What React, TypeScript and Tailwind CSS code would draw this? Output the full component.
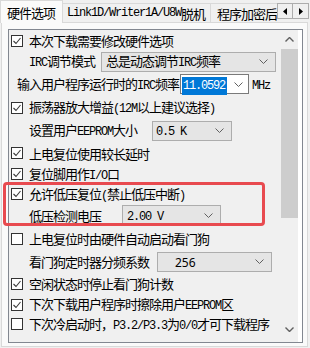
import type { ReactNode } from "react";

function T({ s }: { s: string }) {
  const parts = s.split(/([\x20-\x7e]+)/).filter((p) => p !== "");
  return (
    <>
      {parts.map((p, i) =>
        /^[\x20-\x7e]+$/.test(p) ? (
          <span key={i} className="font-['Liberation_Mono',monospace] text-[12px] tracking-[-1.2px] whitespace-pre">
            {p}
          </span>
        ) : (
          <span key={i}>{p}</span>
        ),
      )}
    </>
  );
}

function Check({ on }: { on?: boolean }) {
  return (
    <div className="w-[12px] h-[12px] shrink-0 border border-[#333] bg-white flex items-center justify-center">
      {on && (
        <svg width="10" height="10" viewBox="0 0 10 10">
          <polyline points="1.5,5 4,7.5 8.5,2" fill="none" stroke="#3a3a3a" strokeWidth="1.1" />
        </svg>
      )}
    </div>
  );
}

function Chevron() {
  return (
    <svg width="9" height="5" viewBox="0 0 9 5" className="shrink-0">
      <polyline points="0.5,0.5 4.5,4.5 8.5,0.5" fill="none" stroke="#606060" strokeWidth="1" />
    </svg>
  );
}

function Select({ w, children, pad = "pl-[4px]" }: { w: string; children: ReactNode; pad?: string }) {
  return (
    <div className={`${w} h-[20px] shrink-0 bg-[#e5e5e5] border border-[#adadad] flex items-center pr-[7px] ${pad}`}>
      <div className="flex-1 whitespace-nowrap">{children}</div>
      <Chevron />
    </div>
  );
}

function CheckRow({ h, on, text }: { h: string; on?: boolean; text: string }) {
  return (
    <div className={`${h} flex items-center`}>
      <Check on={on} />
      <span className="ml-[6px] whitespace-nowrap">
        <T s={text} />
      </span>
    </div>
  );
}

export default function App() {
  return (
    <div className="w-[310px] h-[348px] bg-[#f0f0f0] overflow-hidden relative font-['Noto_Sans_CJK_SC',sans-serif] text-[13px] tracking-[-1px] text-black leading-none">
      {/* tab strip */}
      <div className="flex h-[22px] items-end relative z-10">
        <div className="w-[63px] shrink-0 h-[23px] -mb-px bg-[#fafafa] border border-b-0 border-[#d9d9d9] pl-[6px] flex items-center">
          硬件选项
        </div>
        <div className="w-[148px] shrink-0 h-[19px] border-t border-r border-[#d9d9d9] pl-[4px] flex items-center whitespace-nowrap overflow-hidden">
          <T s="Link1D/Writer1A/U8W脱机" />
        </div>
        <div className="w-[66px] shrink-0 h-[19px] border-t border-[#d9d9d9] pl-[6px] flex items-center whitespace-nowrap overflow-hidden">
          程序加密后
        </div>
        <div className="self-start mt-[3px] flex shrink-0">
          <div className="w-[16px] h-[16px] bg-[#f0f0f0] border border-[#adadad] flex items-center justify-center">
            <svg width="4" height="7" viewBox="0 0 4 7">
              <polygon points="4,0 0,3.5 4,7" fill="#000" />
            </svg>
          </div>
          <div className="w-[16px] h-[16px] bg-[#f0f0f0] border border-l-0 border-[#adadad] flex items-center justify-center">
            <svg width="4" height="7" viewBox="0 0 4 7">
              <polygon points="0,0 4,3.5 0,7" fill="#000" />
            </svg>
          </div>
        </div>
      </div>

      {/* tab panel */}
      <div className="ml-[1px] w-[307px] h-[325px] bg-[#fafafa] border border-[#d9d9d9] pt-[6px] px-[6px]">
        <div className="w-[295px] h-[314px] border border-[#828790] bg-[#f0f0f0] flex">
          {/* options */}
          <div className="w-[272px] pl-[2px]">
            <CheckRow h="h-[21px]" on text="本次下载需要修改硬件选项" />

            <div className="h-[21px] flex items-center pl-[18px]">
              <span className="w-[72px] shrink-0 whitespace-nowrap">
                <T s="IRC调节模式" />
              </span>
              <Select w="w-[175px]">
                <T s="总是动态调节IRC频率" />
              </Select>
            </div>

            <div className="h-[24px] flex items-center pl-[6px]">
              <span className="w-[163px] shrink-0 whitespace-nowrap">
                <T s="输入用户程序运行时的IRC频率" />
              </span>
              <div className="w-[69px] h-[20px] shrink-0 bg-white border border-[#7a7a7a] flex items-center pl-[1px] pr-[5px]">
                <div className="flex-1">
                  <span className="bg-[#0078d7] text-white font-['Liberation_Mono',monospace] text-[12px] tracking-[-1.2px] pl-[1px] pr-[2px] py-[2px]">
                    11.0592
                  </span>
                </div>
                <Chevron />
              </div>
              <span className="ml-[3px]">
                <T s="MHz" />
              </span>
            </div>

            <CheckRow h="h-[23px]" on text="振荡器放大增益(12M以上建议选择)" />

            <div className="h-[23px] flex items-center pl-[18px]">
              <span className="w-[123px] shrink-0 whitespace-nowrap">
                <T s="设置用户EEPROM大小" />
              </span>
              <Select w="w-[80px]" pad="pl-[3px]">
                <T s="0.5 K" />
              </Select>
            </div>

            <CheckRow h="h-[22px]" on text="上电复位使用较长延时" />
            <CheckRow h="h-[20px]" on text="复位脚用作I/O口" />
            <CheckRow h="h-[20px]" on text="允许低压复位(禁止低压中断)" />

            <div className="h-[22px] flex items-center pl-[18px]">
              <span className="w-[93px] shrink-0 whitespace-nowrap">低压检测电压</span>
              <Select w="w-[99px]">
                <T s="2.00 V" />
              </Select>
            </div>

            <CheckRow h="h-[25px]" text="上电复位时由硬件自动启动看门狗" />

            <div className="h-[21px] flex items-center pl-[18px]">
              <span className="w-[128px] shrink-0 whitespace-nowrap">看门狗定时器分频系数</span>
              <Select w="w-[115px]" pad="pl-[17px]">
                <span className="font-['Noto_Sans',sans-serif] text-[12px] tracking-normal">256</span>
              </Select>
            </div>

            <CheckRow h="h-[23px]" on text="空闲状态时停止看门狗计数" />
            <CheckRow h="h-[19px]" on text="下次下载用户程序时擦除用户EEPROM区" />
            <CheckRow h="h-[20px]" text="下次冷启动时，P3.2/P3.3为0/0才可下载程序" />
          </div>

          {/* scrollbar */}
          <div className="w-[17px] mt-[1px] mb-[4px] bg-[#f0f0f0] flex flex-col">
            <div className="h-[17px] flex items-center justify-center">
              <svg width="9" height="5" viewBox="0 0 9 5">
                <polyline points="0.5,4.5 4.5,0.5 8.5,4.5" fill="none" stroke="#606060" strokeWidth="1.4" />
              </svg>
            </div>
            <div className="mt-[1px] h-[169px] bg-[#cdcdcd]" />
            <div className="flex-1" />
            <div className="h-[17px] flex items-center justify-center">
              <svg width="9" height="5" viewBox="0 0 9 5">
                <polyline points="0.5,0.5 4.5,4.5 8.5,0.5" fill="none" stroke="#606060" strokeWidth="1.4" />
              </svg>
            </div>
          </div>
          <div className="w-[4px] bg-white" />
        </div>
      </div>

      {/* highlight annotation */}
      <div className="absolute left-[3px] top-[182px] w-[262px] h-[44px] border-[3px] border-[#e84a4f] rounded-[4px]" />
    </div>
  );
}
